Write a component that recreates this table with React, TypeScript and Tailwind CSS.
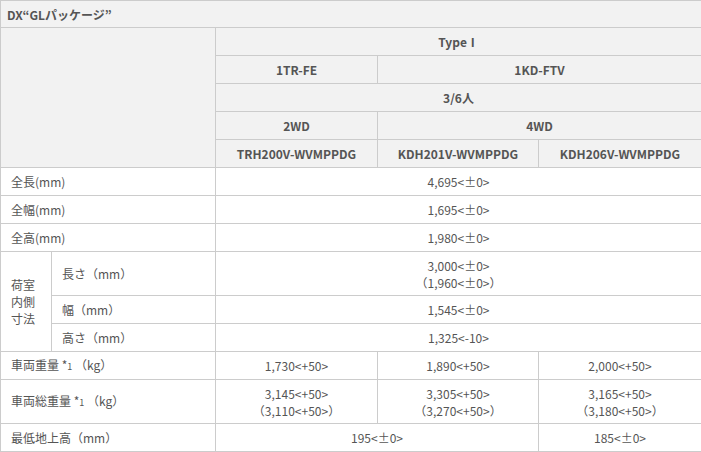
const font = { fontFamily: '"Noto Sans CJK JP", "Noto Sans", sans-serif' };

const head = "border border-[#cccccc] bg-[#f2f2f2] text-center font-bold h-[28px] p-0";
const label = "border border-[#cccccc] bg-white text-left pl-[10px] h-[28px] p-0";
const cell = "border border-[#cccccc] bg-white text-center h-[28px] p-0";

const Star = () => (
  <>
    {" "}*<span className="text-[9px]">1</span>{" "}
  </>
);

const App = () => {
  return (
    <div className="bg-white w-[701px] h-[452px] overflow-hidden text-[#555555] text-[12px] leading-[17px]" style={font}>
      <table className="border-collapse table-fixed w-[701px]">
        <colgroup>
          <col className="w-[51px]" />
          <col className="w-[164px]" />
          <col className="w-[162px]" />
          <col className="w-[161px]" />
          <col className="w-[163px]" />
        </colgroup>
        <tbody>
          <tr>
            <td colSpan={5} className="border border-[#cccccc] bg-[#f2f2f2] font-bold h-[27px] pl-[6px] p-0">
              DX“GLパッケージ”
            </td>
          </tr>
          <tr>
            <td colSpan={2} rowSpan={5} className="border border-[#cccccc] bg-[#f2f2f2]"></td>
            <td colSpan={3} className={head}>TypeⅠ</td>
          </tr>
          <tr>
            <td className={head}>1TR-FE</td>
            <td colSpan={2} className={head}>1KD-FTV</td>
          </tr>
          <tr>
            <td colSpan={3} className={head}>3/6人</td>
          </tr>
          <tr>
            <td className={head}>2WD</td>
            <td colSpan={2} className={head}>4WD</td>
          </tr>
          <tr>
            <td className={head}>TRH200V-WVMPPDG</td>
            <td className={head}>KDH201V-WVMPPDG</td>
            <td className={head}>KDH206V-WVMPPDG</td>
          </tr>

          <tr>
            <td colSpan={2} className={label}>全長(mm)</td>
            <td colSpan={3} className={cell}>4,695&lt;±0&gt;</td>
          </tr>
          <tr>
            <td colSpan={2} className={label}>全幅(mm)</td>
            <td colSpan={3} className={cell}>1,695&lt;±0&gt;</td>
          </tr>
          <tr>
            <td colSpan={2} className={label}>全高(mm)</td>
            <td colSpan={3} className={cell}>1,980&lt;±0&gt;</td>
          </tr>
          <tr>
            <td rowSpan={3} className="border border-[#cccccc] bg-white text-left pl-[10px] pr-[4px] p-0">
              荷室<br />内側<br />寸法
            </td>
            <td className={label + " h-[44px]"}>長さ（mm）</td>
            <td colSpan={3} className={cell + " h-[44px]"}>
              3,000&lt;±0&gt;
              <br />
              （1,960&lt;±0&gt;）
            </td>
          </tr>
          <tr>
            <td className={label}>幅（mm）</td>
            <td colSpan={3} className={cell}>1,545&lt;±0&gt;</td>
          </tr>
          <tr>
            <td className={label}>高さ（mm）</td>
            <td colSpan={3} className={cell}>1,325&lt;-10&gt;</td>
          </tr>
          <tr>
            <td colSpan={2} className={label}>車両重量<Star />（kg）</td>
            <td className={cell}>1,730&lt;+50&gt;</td>
            <td className={cell}>1,890&lt;+50&gt;</td>
            <td className={cell}>2,000&lt;+50&gt;</td>
          </tr>
          <tr>
            <td colSpan={2} className={label + " h-[44px]"}>車両総重量<Star />（kg）</td>
            <td className={cell + " h-[44px]"}>3,145&lt;+50&gt;<br />（3,110&lt;+50&gt;）</td>
            <td className={cell + " h-[44px]"}>3,305&lt;+50&gt;<br />（3,270&lt;+50&gt;）</td>
            <td className={cell + " h-[44px]"}>3,165&lt;+50&gt;<br />（3,180&lt;+50&gt;）</td>
          </tr>
          <tr>
            <td colSpan={2} className={label}>最低地上高（mm）</td>
            <td colSpan={2} className={cell}>195&lt;±0&gt;</td>
            <td className={cell}>185&lt;±0&gt;</td>
          </tr>
        </tbody>
      </table>
    </div>
  );
};

export default App;
